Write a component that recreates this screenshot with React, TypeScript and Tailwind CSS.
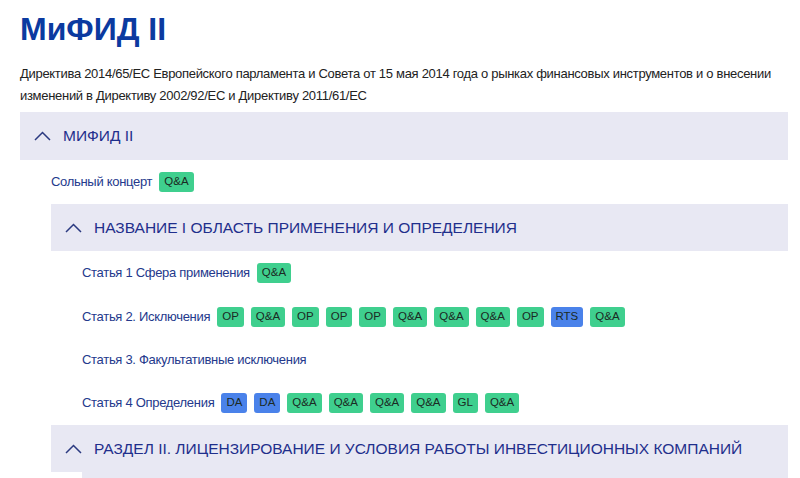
import React from "react";

type Tag = { label: string; kind: "g" | "b" };

const g = (label: string): Tag => ({ label, kind: "g" });
const b = (label: string): Tag => ({ label, kind: "b" });

function Badge({ tag }: { tag: Tag }) {
  return (
    <span
      className={
        "inline-flex h-[20px] items-center rounded-[3px] px-[5px] text-[11.5px] leading-none text-[#1b2a24] " +
        (tag.kind === "g" ? "bg-[#3fcf8e]" : "bg-[#4a82ea]")
      }
    >
      {tag.label}
    </span>
  );
}

function Chevron() {
  return (
    <svg width="17" height="10" viewBox="0 0 17 10" fill="none" className="shrink-0">
      <path d="M1 9 L8.5 1.5 L16 9" stroke="#2b3a80" strokeWidth="1.5" />
    </svg>
  );
}

function Header({ title, className }: { title: string; className?: string }) {
  return (
    <div className={"flex items-center bg-[#e8e8f3] pl-[14px] " + (className ?? "")}>
      <Chevron />
      <span className="ml-[12px] text-[15.5px] text-[#1f2f8c]">{title}</span>
    </div>
  );
}

function Row({ text, tags, className }: { text: string; tags: Tag[]; className?: string }) {
  return (
    <div className={"flex items-center gap-[7px] " + (className ?? "")}>
      <span className="mr-[0px] text-[13px] tracking-[-0.3px] text-[#24398c]">{text}</span>
      {tags.map((t, i) => (
        <Badge key={i} tag={t} />
      ))}
    </div>
  );
}

export default function App() {
  return (
    <div className="h-[478px] w-[800px] overflow-hidden bg-white font-['Liberation_Sans',Arial,sans-serif]">
      <div className="pl-[20px] pr-[12px]">
        <h1 className="mt-[11px] text-[32px] font-bold leading-[36px] text-[#0b3aa0]">МиФИД II</h1>
        <p className="mt-[16px] text-[13px] leading-[22px] tracking-[-0.3px] text-[#222]">
          Директива 2014/65/ЕС Европейского парламента и Совета от 15 мая 2014 года о рынках финансовых инструментов и о внесении
          изменений в Директиву 2002/92/ЕС и Директиву 2011/61/ЕС
        </p>

        <Header title="МИФИД II" className="mt-[5px] h-[48px]" />

        <div className="pl-[31px]">
          <Row text="Сольный концерт" tags={[g("Q&A")]} className="h-[44px]" />

          <Header title="НАЗВАНИЕ I ОБЛАСТЬ ПРИМЕНЕНИЯ И ОПРЕДЕЛЕНИЯ" className="h-[47px]" />

          <div className="pl-[31px]">
            <Row text="Статья 1 Сфера применения" tags={[g("Q&A")]} className="h-[44px]" />
            <Row
              text="Статья 2. Исключения"
              tags={[g("OP"), g("Q&A"), g("OP"), g("OP"), g("OP"), g("Q&A"), g("Q&A"), g("Q&A"), g("OP"), b("RTS"), g("Q&A")]}
              className="h-[44px]"
            />
            <Row text="Статья 3. Факультативные исключения" tags={[]} className="h-[42px]" />
            <Row
              text="Статья 4 Определения"
              tags={[b("DA"), b("DA"), g("Q&A"), g("Q&A"), g("Q&A"), g("Q&A"), g("GL"), g("Q&A")]}
              className="h-[44px]"
            />
          </div>

          <Header
            title="РАЗДЕЛ II. ЛИЦЕНЗИРОВАНИЕ И УСЛОВИЯ РАБОТЫ ИНВЕСТИЦИОННЫХ КОМПАНИЙ"
            className="h-[47px]"
          />
          <div className="pl-[31px]">
            <div className="h-[20px] bg-[#e8e8f3]" />
          </div>
        </div>
      </div>
    </div>
  );
}
